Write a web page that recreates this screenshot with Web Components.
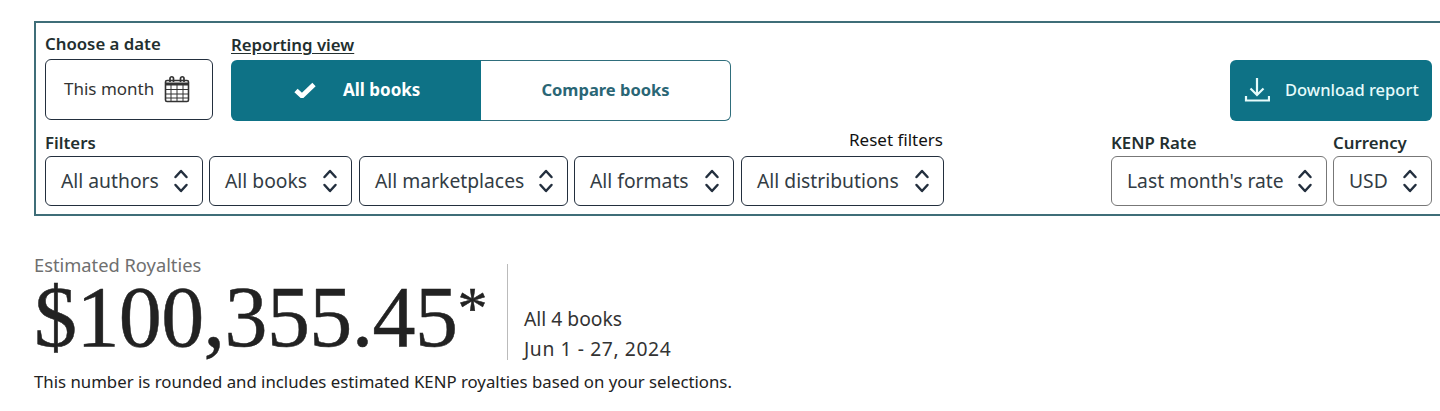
<!DOCTYPE html>
<html lang="en"><head><meta charset="utf-8"><title>Reports</title>
<style>
html,body{margin:0;padding:0;background:#fff;overflow:hidden;height:411px}
body{font-family:"Noto Sans","Open Sans",sans-serif;color:#232f3e}
</style></head><body>
<kdp-report>
  <kdp-panel>
    <kdp-field slot="date" label="Choose a date" tall style="width:168px"><kdp-date>This month</kdp-date></kdp-field>
    <kdp-field slot="view" label="Reporting view" tall underline style="width:500px"><kdp-seg on="All books" off="Compare books"></kdp-seg></kdp-field>
    <kdp-download slot="action">Download report</kdp-download>
    <kdp-filters slot="filters">
      <kdp-select style="width:158px">All authors</kdp-select>
      <kdp-select style="width:143px">All books</kdp-select>
      <kdp-select style="width:209px;margin-left:1px">All marketplaces</kdp-select>
      <kdp-select style="width:160px">All formats</kdp-select>
      <kdp-select style="width:203px;margin-left:1px">All distributions</kdp-select>
    </kdp-filters>
    <kdp-field slot="kenp" label="KENP Rate" style="width:216px"><kdp-select soft style="width:216px">Last month's rate</kdp-select></kdp-field>
    <kdp-field slot="currency" label="Currency" style="width:99px"><kdp-select soft style="width:99px">USD</kdp-select></kdp-field>
  </kdp-panel>
  <kdp-royalties label="Estimated Royalties" amount="$100,355.45" scope="All 4 books" range="Jun 1 - 27, 2024" note="This number is rounded and includes estimated KENP royalties based on your selections."></kdp-royalties>
</kdp-report>
<script>
const make=(name,html)=>customElements.define(name,class extends HTMLElement{
  constructor(){super();this.attachShadow({mode:'open'});}
  connectedCallback(){
    const a=k=>this.getAttribute(k)||'';
    this.shadowRoot.innerHTML=typeof html==='function'?html(a,this):html;
  }
});
make('kdp-report',`<style>:host{display:block;padding-top:21px}</style><slot></slot>`);
make('kdp-panel',`<style>
:host{display:block;box-sizing:border-box;width:1420px;margin-left:34px;height:195px;border:2px solid #3f6e78;padding:10px 20px 0 9px}
.row{display:flex;align-items:flex-start}
.top{height:99px}
.sp{flex:1}
.action{padding-top:27px}
.f{margin-right:auto}
.k{margin-right:6px}
</style>
<div class="row top"><slot name="date"></slot><div style="width:18px"></div><slot name="view"></slot><div class="sp"></div><div class="action"><slot name="action"></slot></div></div>
<div class="row"><div class="f"><slot name="filters"></slot></div><div class="k"><slot name="kenp"></slot></div><slot name="currency"></slot></div>`);
make('kdp-field',(a,el)=>`<style>
:host{display:block}
.l{display:block;box-sizing:border-box;font:600 16.800px/22px "Noto Sans",sans-serif;color:#232f2f;height:${el.hasAttribute('tall')?27:24}px;white-space:nowrap;${el.hasAttribute('underline')?'padding-top:1px;':''}}
u{text-underline-offset:2px}
</style><span class="l">${el.hasAttribute('underline')?`<u>${a('label')}</u>`:a('label')}</span><slot></slot>`);
const chev=`<svg width="16" height="28" viewBox="0 0 16 28" fill="none" stroke="#232f3e" stroke-width="2.500" stroke-linecap="round" stroke-linejoin="round" aria-hidden="true"><path d="M2.500 10 8 4l5.500 6"/><path d="M2.500 18 8 24l5.500-6"/></svg>`;
make('kdp-select',(a,el)=>`<style>
:host{display:block;box-sizing:border-box;height:50px;border:1px solid ${el.hasAttribute('soft')?'#777':'#232f3e'};border-radius:6px;background:#fff}
.w{display:flex;align-items:center;height:100%;padding:0 13px 0 15px;font:400 19.300px/24px "Noto Sans",sans-serif;color:#333c44;white-space:nowrap}
.t{flex:1}
svg{display:block}
</style><div class="w"><span class="t"><slot></slot></span>${chev}</div>`);
make('kdp-date',`<style>
:host{display:block;box-sizing:border-box;height:61px;border:1px solid #232f3e;border-radius:6px;margin-top:-1px}
.w{display:flex;align-items:center;height:100%;box-sizing:border-box;padding:0 22px 1px 18px;font:400 17px/24px "Noto Sans",sans-serif;color:#333;white-space:nowrap;justify-content:space-between}
</style><div class="w"><span><slot></slot></span>
<svg width="26" height="28" viewBox="0 0 26 28" aria-hidden="true"><g fill="none" stroke="#333"><rect x="1.500" y="5.500" width="23" height="21" rx="1.500" stroke-width="1.600"/><path d="M1.500 9h23" stroke-width="3"/><path d="M1.500 14.500h23M1.500 19h23M1.500 23h23M7 10v16M13 10v16M19 10v16" stroke-width="1"/><path d="M6 7V3.500a1.500 1.500 0 0 1 3.500 0V7M16.500 7V3.500a1.500 1.500 0 0 1 3.500 0V7" stroke-width="1.700"/></g></svg></div>`);
make('kdp-seg',a=>`<style>
:host{display:block}
.s{display:flex;height:61px;width:500px}
.b{display:flex;align-items:center;box-sizing:border-box;font:700 16.500px/24px "Noto Sans",sans-serif;white-space:nowrap;padding-bottom:2px}
.on{width:250px;background:#0e7286;color:#fff;border-radius:6px 0 0 6px;padding-left:63px;font-size:17px}
.on svg{margin-right:27px;display:block}
.off{flex:1;justify-content:center;border:1px solid #2f6e7c;border-left:0;border-radius:0 6px 6px 0;color:#2a6675}
</style><div class="s"><div class="b on"><svg width="22" height="16" viewBox="0 0 22 16" aria-hidden="true"><path d="M2 8.500 8 14 20 2.500" fill="none" stroke="#fff" stroke-width="4.800"/></svg>${a('on')}</div><div class="b off">${a('off')}</div></div>`);
make('kdp-download',`<style>
:host{display:block;box-sizing:border-box;width:202px;height:61px;background:#0e7286;border-radius:6px;color:#e6fbfb}
.w{display:flex;align-items:center;height:100%;box-sizing:border-box;padding:0 0 1px 14px;font:500 16.500px/24px "Noto Sans",sans-serif;white-space:nowrap}
svg{margin-right:15px}
</style><div class="w"><svg width="26" height="28" viewBox="0 0 26 28" fill="none" stroke="#e6fbfb" stroke-width="2.200" aria-hidden="true"><path d="M13 2v17M6.500 12.500 13 19l6.500-6.500"/><path d="M2 20v4.500h23V20"/></svg><slot></slot></div>`);
make('kdp-filters',`<style>
:host{display:block;position:relative}
.r{display:flex;gap:6px;width:899px;padding-top:24px}
.x{position:absolute;right:1px;top:-3px;font:400 17px/22px "Noto Sans",sans-serif;color:#111;white-space:nowrap}
.l{position:absolute;left:0;top:0;font:600 16.800px/22px "Noto Sans",sans-serif;color:#232f2f}
</style><span class="l">Filters</span><span class="x">Reset filters</span><div class="r"><slot></slot></div>`);
make('kdp-royalties',a=>`<style>
:host{display:block;margin:48px 0 0 34px;color:#222}
.g{display:flex;align-items:flex-start}
.lab{font:400 18.300px/24px "Noto Sans",sans-serif;color:#6f6f6f;white-space:nowrap;height:22px;margin-top:-11px}
.amt{font:400 86px/74px "Liberation Serif",serif;color:#222;white-space:nowrap;letter-spacing:-.6px;margin-top:5px;-webkit-text-stroke:.5px #222}
.amt span{font-size:60px;line-height:0;vertical-align:18px;letter-spacing:0}
.main{width:473px}
.side{box-sizing:border-box;border-left:1px solid #bbb;height:96px;padding:40px 0 0 16px;font:400 19.300px/30px "Noto Sans",sans-serif;color:#333;white-space:nowrap}
.rng{letter-spacing:.6px}
.note{font:400 16.800px/22px "Noto Sans",sans-serif;color:#222;white-space:nowrap;margin-top:11px}
</style><div class="g"><div class="main"><div class="lab">${a('label')}</div><div class="amt">${a('amount')}<span>*</span></div></div><div class="side"><div>${a('scope')}</div><div class="rng">${a('range')}</div></div></div><div class="note">${a('note')}</div>`);
</script>
</body></html>
